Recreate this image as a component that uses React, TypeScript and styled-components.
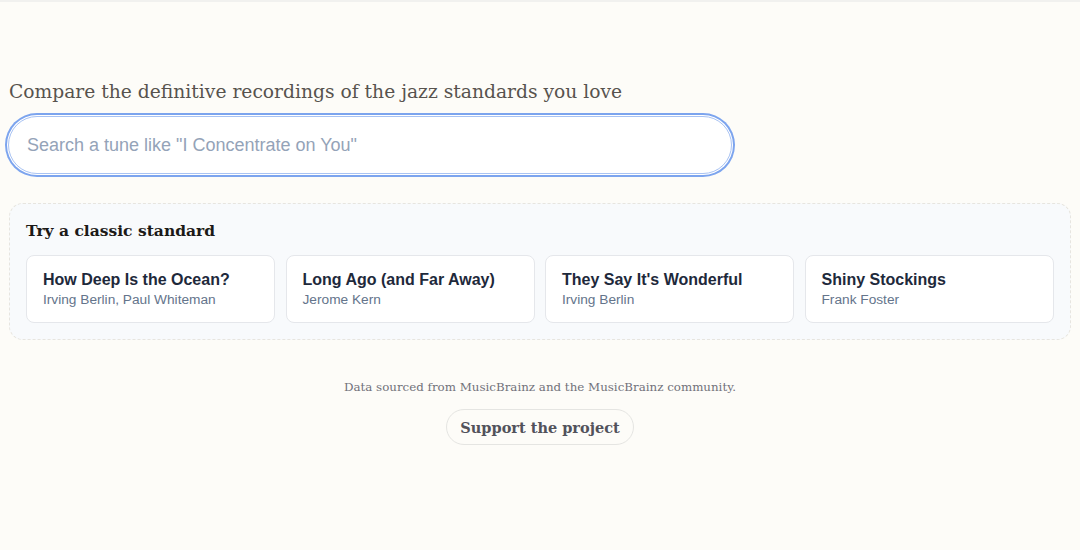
import styled, { createGlobalStyle } from "styled-components";

const GlobalStyle = createGlobalStyle`
  html, body {
    margin: 0;
    padding: 0;
    background: #fdfcf8;
  }
  * {
    box-sizing: border-box;
  }
`;

const Page = styled.main`
  min-height: 550px;
  padding: 77px 9px 40px;
  border-top: 2px solid #f1f1ef;
`;

const Tagline = styled.h1`
  margin: 0 0 11px;
  font-family: "DejaVu Serif", "Liberation Serif", serif;
  font-weight: 400;
  font-size: 18.7px;
  line-height: 26px;
  color: #57534e;
`;

const SearchBox = styled.input`
  display: block;
  width: 724px;
  height: 58px;
  margin-left: -1px;
  padding: 0 18px;
  border: 1px solid #a9c3f3;
  border-radius: 999px;
  background: #fff;
  box-shadow: 0 0 0 1px #fff, 0 0 0 3px #7ca4ee;
  font-family: "Liberation Sans", Arial, sans-serif;
  font-size: 18px;
  color: #1e293b;
  outline: none;

  &::placeholder {
    color: #94a3b8;
  }
`;

const Panel = styled.section`
  margin-top: 29px;
  padding: 15px 16px 16px;
  border: 1px dashed #e7e5df;
  border-radius: 14px;
  background: #f8fafc;
`;

const PanelTitle = styled.h2`
  margin: 0 0 12px;
  font-family: "DejaVu Serif", "Liberation Serif", serif;
  font-weight: 700;
  font-size: 15.5px;
  line-height: 24px;
  color: #1c1917;
`;

const CardGrid = styled.div`
  display: grid;
  grid-template-columns: repeat(4, 249px);
  gap: 10.5px;
`;

const Card = styled.button`
  display: flex;
  flex-direction: column;
  align-items: flex-start;
  height: 68px;
  padding: 14px 16px;
  border: 1px solid #e5e7eb;
  border-radius: 8px;
  background: #fff;
  text-align: left;
  cursor: pointer;
`;

const CardTitle = styled.span`
  font-family: "Liberation Sans", Arial, sans-serif;
  font-weight: 700;
  font-size: 16px;
  line-height: 20px;
  color: #1e293b;
`;

const CardSub = styled.span`
  font-family: "Liberation Sans", Arial, sans-serif;
  font-size: 13.7px;
  line-height: 19px;
  color: #64748b;
`;

const Footer = styled.footer`
  display: flex;
  flex-direction: column;
  align-items: center;
  margin-top: 39px;
  gap: 14px;
`;

const Credit = styled.p`
  margin: 0;
  font-family: "DejaVu Serif", "Liberation Serif", serif;
  font-size: 11.85px;
  line-height: 16px;
  color: #71717a;
`;

const SupportButton = styled.button`
  height: 36px;
  padding: 0 13px;
  border: 1px solid #e5e5e2;
  border-radius: 999px;
  background: #fdfcf8;
  font-family: "DejaVu Serif", "Liberation Serif", serif;
  font-weight: 700;
  font-size: 14.5px;
  color: #52525b;
  cursor: pointer;
`;

const standards = [
  { title: "How Deep Is the Ocean?", by: "Irving Berlin, Paul Whiteman" },
  { title: "Long Ago (and Far Away)", by: "Jerome Kern" },
  { title: "They Say It's Wonderful", by: "Irving Berlin" },
  { title: "Shiny Stockings", by: "Frank Foster" },
];

export default function App() {
  return (
    <>
      <GlobalStyle />
      <Page>
        <Tagline>Compare the definitive recordings of the jazz standards you love</Tagline>
        <SearchBox placeholder='Search a tune like "I Concentrate on You"' />
        <Panel>
          <PanelTitle>Try a classic standard</PanelTitle>
          <CardGrid>
            {standards.map((s) => (
              <Card key={s.title}>
                <CardTitle>{s.title}</CardTitle>
                <CardSub>{s.by}</CardSub>
              </Card>
            ))}
          </CardGrid>
        </Panel>
        <Footer>
          <Credit>Data sourced from MusicBrainz and the MusicBrainz community.</Credit>
          <SupportButton>Support the project</SupportButton>
        </Footer>
      </Page>
    </>
  );
}
